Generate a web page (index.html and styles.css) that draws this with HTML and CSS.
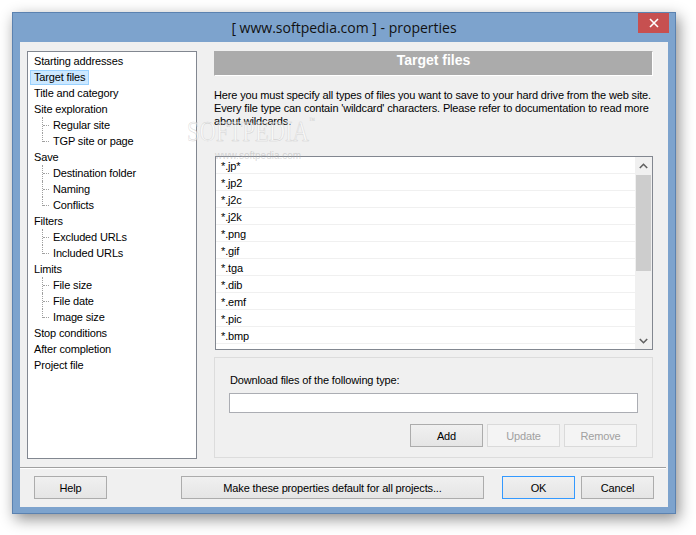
FILE: index.html
```html
<!DOCTYPE html>
<html lang="en">
<head>
<meta charset="utf-8">
<title>properties</title>
<link rel="stylesheet" href="styles.css">
</head>
<body>
<div class="desktop">
  <div class="window">
    <div class="titlebar">
      <span class="spacer"></span>
      <span class="title">[ www.softpedia.com ] - properties</span>
      <button class="close" aria-label="Close">
        <svg width="10" height="10" viewBox="0 0 10 10"><path d="M1 1 L9 9 M9 1 L1 9" stroke="#fff" stroke-width="1.6" fill="none"/></svg>
      </button>
    </div>
    <div class="client">
      <div class="main">
        <ul class="tree">
          <li class="node"><span class="lbl">Starting addresses</span></li>
          <li class="node"><span class="lbl selected">Target files</span></li>
          <li class="node"><span class="lbl">Title and category</span></li>
          <li class="node"><span class="lbl">Site exploration</span></li>
          <li class="node child"><span class="lbl">Regular site</span></li>
          <li class="node child last"><span class="lbl">TGP site or page</span></li>
          <li class="node"><span class="lbl">Save</span></li>
          <li class="node child"><span class="lbl">Destination folder</span></li>
          <li class="node child"><span class="lbl">Naming</span></li>
          <li class="node child last"><span class="lbl">Conflicts</span></li>
          <li class="node"><span class="lbl">Filters</span></li>
          <li class="node child"><span class="lbl">Excluded URLs</span></li>
          <li class="node child last"><span class="lbl">Included URLs</span></li>
          <li class="node"><span class="lbl">Limits</span></li>
          <li class="node child"><span class="lbl">File size</span></li>
          <li class="node child"><span class="lbl">File date</span></li>
          <li class="node child last"><span class="lbl">Image size</span></li>
          <li class="node"><span class="lbl">Stop conditions</span></li>
          <li class="node"><span class="lbl">After completion</span></li>
          <li class="node"><span class="lbl">Project file</span></li>
        </ul>
        <div class="panel">
          <div class="panel-header">Target files</div>
          <p class="desc">Here you must specify all types of files you want to save to your hard drive from the web site.<br>Every file type can contain 'wildcard' characters. Please refer to documentation to read more<br>about wildcards.</p>
          <div class="listbox">
            <ul class="items">
              <li>*.jp*</li>
              <li>*.jp2</li>
              <li>*.j2c</li>
              <li>*.j2k</li>
              <li>*.png</li>
              <li>*.gif</li>
              <li>*.tga</li>
              <li>*.dib</li>
              <li>*.emf</li>
              <li>*.pic</li>
              <li>*.bmp</li>
            </ul>
            <div class="scrollbar">
              <div class="arrow">
                <svg width="9" height="6" viewBox="0 0 9 6"><path d="M0.8 5 L4.5 1.3 L8.2 5" stroke="#606060" stroke-width="1.6" fill="none"/></svg>
              </div>
              <div class="track"><div class="thumb"></div></div>
              <div class="arrow">
                <svg width="9" height="6" viewBox="0 0 9 6"><path d="M0.8 1 L4.5 4.7 L8.2 1" stroke="#606060" stroke-width="1.6" fill="none"/></svg>
              </div>
            </div>
          </div>
          <div class="group">
            <label class="group-label" for="ftype">Download files of the following type:</label>
            <input class="textbox" id="ftype" type="text">
            <div class="group-buttons">
              <button class="btn">Add</button>
              <button class="btn disabled">Update</button>
              <button class="btn disabled">Remove</button>
            </div>
          </div>
        </div>
      </div>
      <div class="separator"></div>
      <div class="footer">
        <button class="btn">Help</button>
        <button class="btn wide">Make these properties default for all projects...</button>
        <button class="btn default">OK</button>
        <button class="btn">Cancel</button>
      </div>
    </div>
    <span class="wm-big">SOFTPEDIA<sup>™</sup></span>
    <span class="wm-small">www.softpedia.com</span>
  </div>
</div>
</body>
</html>
```

FILE: styles.css
```css
* { box-sizing: border-box; }

body {
  margin: 0;
  background: #ffffff;
  font-family: "Liberation Sans", Arial, sans-serif;
  font-size: 11px;
  letter-spacing: -0.15px;
  color: #000;
}

.desktop {
  padding: 12px 0 0 12px;
  width: 696px;
  height: 535px;
}

.window {
  position: relative;
  width: 664px;
  height: 502px;
  background: #7da3cd;
  border: 1px solid #5b82b0;
  box-shadow: 3px 5px 14px rgba(0, 0, 0, 0.45);
  display: flex;
  flex-direction: column;
}

.titlebar {
  height: 29px;
  display: grid;
  grid-template-columns: 1fr auto 1fr;
  align-items: start;
}

.title {
  font-family: "Open Sans", "Noto Sans", sans-serif;
  font-size: 14px;
  letter-spacing: 0;
  line-height: 29px;
  color: #111;
  white-space: nowrap;
}

.close {
  justify-self: end;
  margin-right: 6px;
  width: 31px;
  height: 20px;
  border: 0;
  padding: 0;
  background: #c75050;
  display: flex;
  align-items: center;
  justify-content: center;
}

.client {
  margin: 0 7px 6px 7px;
  height: 465px;
  background: #f0f0f0;
  padding-top: 9px;
  display: flex;
  flex-direction: column;
}

.main {
  display: flex;
  padding-left: 7px;
  height: 408px;
}

/* tree */
.tree {
  list-style: none;
  margin: 0;
  width: 170px;
  height: 408px;
  background: #fff;
  border: 1px solid #828790;
  padding: 1px 0 0 0;
}

.node {
  position: relative;
  height: 16px;
  padding-left: 2px;
  display: flex;
  align-items: center;
}

.node.child { padding-left: 21px; }

.node.child::before {
  content: "";
  position: absolute;
  left: 14px;
  top: 0;
  height: 16px;
  border-left: 1px dotted #a0a0a0;
}

.node.child.last::before { height: 9px; }

.node.child::after {
  content: "";
  position: absolute;
  left: 15px;
  top: 8px;
  width: 6px;
  border-top: 1px dotted #a0a0a0;
}

.lbl {
  display: inline-block;
  height: 15px;
  line-height: 13px;
  padding: 0 3px;
  border: 1px solid transparent;
  white-space: nowrap;
}

.lbl.selected {
  background: #cce8ff;
  border-color: #99d1ff;
}

/* panel */
.panel {
  margin-left: 17px;
  width: 439px;
  display: flex;
  flex-direction: column;
}

.panel-header {
  height: 25px;
  background: #ababab;
  border: 1px solid #ababab;
  border-right-color: #fff;
  border-bottom-color: #fff;
  color: #fff;
  font-weight: bold;
  font-size: 14px;
  letter-spacing: 0;
  line-height: 17px;
  text-align: center;
}

.desc {
  margin: 13px 0 0 0;
  line-height: 13px;
  height: 39px;
  white-space: nowrap;
}

.listbox {
  margin-top: 28px;
  height: 194px;
  border: 1px solid #828790;
  background: #fff;
  display: flex;
  margin-left: 1px;
}

.items {
  list-style: none;
  margin: 0;
  padding: 0;
  flex: 1;
  overflow: hidden;
}

.items li {
  height: 17px;
  line-height: 18px;
  padding-left: 5px;
  border-bottom: 1px solid #f0f0f0;
}

.scrollbar {
  width: 17px;
  background: #f0f0f0;
  display: flex;
  flex-direction: column;
}

.arrow {
  height: 17px;
  display: flex;
  align-items: center;
  justify-content: center;
}

.track {
  flex: 1;
  padding: 1px 1px 0 1px;
}

.thumb {
  height: 96px;
  background: #cdcdcd;
}

.group {
  margin-top: 7px;
  height: 101px;
  border: 1px solid #dcdcdc;
  padding: 16px 14px 0 14px;
  display: flex;
  flex-direction: column;
}

.group-label {
  line-height: 13px;
  padding-left: 1px;
}

.textbox {
  margin-top: 6px;
  height: 20px;
  border: 1px solid #abadb3;
  background: #fff;
  font: inherit;
  padding: 0 3px;
}

.group-buttons {
  margin-top: 11px;
  display: flex;
  justify-content: flex-end;
  gap: 4px;
  padding-right: 1px;
}

.btn {
  height: 23px;
  width: 73px;
  font-family: "Liberation Sans", Arial, sans-serif;
  font-size: 11px;
  letter-spacing: -0.15px;
  color: #000;
  background: linear-gradient(#f0f0f0, #e5e5e5);
  border: 1px solid #acacac;
  padding: 0;
}

.btn.disabled {
  background: #f4f4f4;
  border-color: #dadada;
  color: #a0a0a0;
}

.btn.default {
  border-color: #3399ff;
}

.separator {
  margin-top: 8px;
  margin-right: 2px;
  height: 2px;
  border-top: 1px solid #a0a0a0;
  border-bottom: 1px solid #ffffff;
}

.footer {
  margin-top: 7px;
  padding: 0 14px;
  display: flex;
}

.footer .wide {
  width: 303px;
  margin-left: 74px;
}

.footer .default {
  margin-left: 18px;
  margin-right: 6px;
}

/* watermark overlay */
.wm-big {
  position: absolute;
  left: 174px;
  top: 104px;
  font-family: "Liberation Serif", serif;
  font-size: 29px;
  line-height: 1;
  letter-spacing: 0;
  color: rgba(255, 255, 255, 0.55);
  -webkit-text-stroke: 0.6px rgba(170, 170, 170, 0.45);
  transform: scaleX(0.78);
  transform-origin: left top;
  pointer-events: none;
}

.wm-big sup {
  font-size: 8px;
  vertical-align: top;
  -webkit-text-stroke: 0;
  color: rgba(170, 170, 170, 0.5);
}

.wm-small {
  position: absolute;
  left: 202px;
  top: 137px;
  font-size: 10px;
  letter-spacing: 0;
  color: rgba(170, 170, 170, 0.45);
  pointer-events: none;
}
```
